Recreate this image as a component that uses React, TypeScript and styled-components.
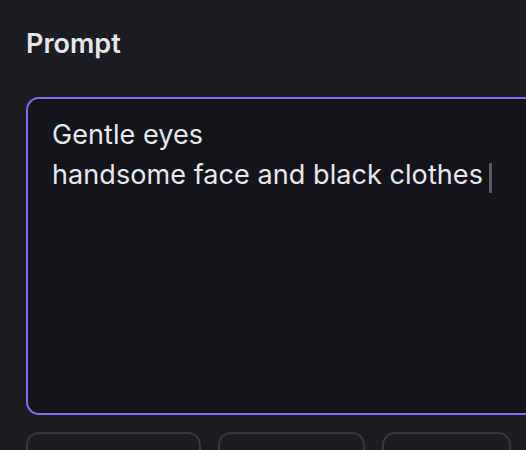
import React from "react";
import styled, { createGlobalStyle } from "styled-components";

const Global = createGlobalStyle`
  html, body { margin: 0; padding: 0; background: #1c1d22; }
  body { font-family: Inter, "Noto Sans", sans-serif; overflow: hidden; }
`;

const Page = styled.div`
  width: 526px;
  height: 450px;
  overflow: hidden;
  padding: 26px 0 0 26px;
  box-sizing: border-box;
  display: flex;
  flex-direction: column;
`;

const Label = styled.div`
  color: #e6e6ea;
  font-size: 27px;
  font-weight: 600;
  line-height: 36px;
  margin-bottom: 35px;
`;

const Editor = styled.div`
  width: 560px;
  height: 318px;
  flex: none;
  box-sizing: border-box;
  border: 2px solid #7b70f2;
  border-radius: 13px;
  background: #14151a;
  padding: 16px 24px;
  color: #e8e8ee;
  font-size: 27px;
  letter-spacing: 0.07px;
  line-height: 40px;
`;

const Line = styled.div`
  display: flex;
  align-items: center;
  white-space: pre;
`;

const Caret = styled.span`
  display: inline-block;
  width: 3px;
  height: 30px;
  margin-left: 6px;
  margin-top: 6px;
  border-radius: 1px;
  background: #5b5c62;
`;

const Options = styled.div`
  display: flex;
  gap: 17px;
  margin-top: 17px;
`;

const Option = styled.div<{ $w: number }>`
  width: ${(p) => p.$w}px;
  height: 60px;
  flex: none;
  box-sizing: border-box;
  border: 2px solid #36373d;
  border-radius: 13px;
  background: #1c1d22;
`;

export default function App() {
  return (
    <>
      <Global />
      <Page>
        <Label>Prompt</Label>
        <Editor>
          <Line>Gentle eyes</Line>
          <Line>
            handsome face and black clothes
            <Caret />
          </Line>
        </Editor>
        <Options>
          <Option $w={175} />
          <Option $w={147} />
          <Option $w={129} />
        </Options>
      </Page>
    </>
  );
}
